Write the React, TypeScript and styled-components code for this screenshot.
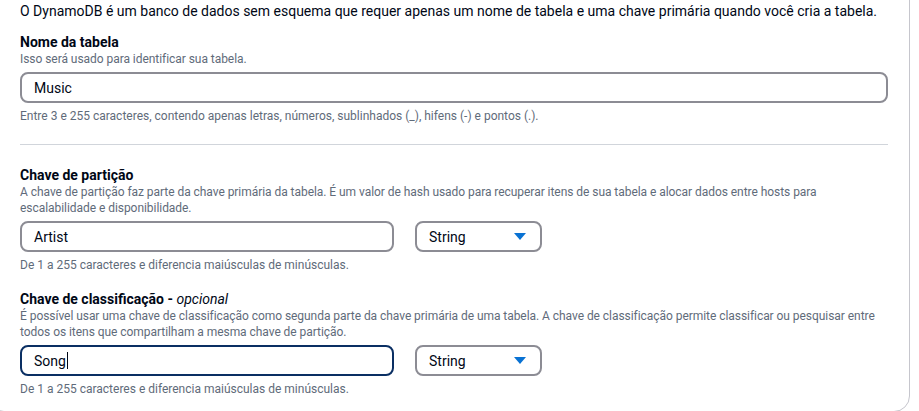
import styled, { createGlobalStyle } from 'styled-components'

const GlobalStyle = createGlobalStyle`
	html, body {
		margin: 0;
		padding: 0;
		background: #ffffff;
		overflow: hidden;
	}
	body {
		font-family: Roboto, 'Noto Sans', sans-serif;
		color: #000716;
	}
`

type FieldProps = {
	label: string
	optional?: boolean
	description: string
	value: string
	hint: string
	focused?: boolean
	withType?: boolean
}

function Field({ label, optional, description, value, hint, focused, withType }: FieldProps) {
	return (
		<FieldBlock>
			<Label>
				{label}
				{optional && (
					<>
						{' - '}
						<Optional>opcional</Optional>
					</>
				)}
			</Label>
			<Description>{description}</Description>
			<InputRow>
				<TextBox $focused={focused} $wide={!withType}>
					{value}
					{focused && <Caret />}
				</TextBox>
				{withType && (
					<SelectBox>
						<span>String</span>
						<svg width="12" height="8" viewBox="0 0 12 8">
							<path d="M0 0 L12 0 L6 7 Z" fill="#0972d3" />
						</svg>
					</SelectBox>
				)}
			</InputRow>
			<Hint>{hint}</Hint>
		</FieldBlock>
	)
}

export default function App() {
	return (
		<>
			<GlobalStyle />
			<Card>
				<Intro>
					O DynamoDB é um banco de dados sem esquema que requer apenas um nome de tabela e uma
					chave primária quando você cria a tabela.
				</Intro>
				<Field
					label="Nome da tabela"
					description="Isso será usado para identificar sua tabela."
					value="Music"
					hint="Entre 3 e 255 caracteres, contendo apenas letras, números, sublinhados (_), hifens (-) e pontos (.)."
				/>
				<Divider />
				<Field
					label="Chave de partição"
					description="A chave de partição faz parte da chave primária da tabela. É um valor de hash usado para recuperar itens de sua tabela e alocar dados entre hosts para escalabilidade e disponibilidade."
					value="Artist"
					hint="De 1 a 255 caracteres e diferencia maiúsculas de minúsculas."
					withType
				/>
				<Field
					label="Chave de classificação"
					optional
					description="É possível usar uma chave de classificação como segunda parte da chave primária de uma tabela. A chave de classificação permite classificar ou pesquisar entre todos os itens que compartilham a mesma chave de partição."
					value="Song"
					hint="De 1 a 255 caracteres e diferencia maiúsculas de minúsculas."
					focused
					withType
				/>
			</Card>
		</>
	)
}

const Card = styled.div`
	box-sizing: border-box;
	width: 922px;
	margin: -20px 0 0 -12px;
	padding: 20px 21px 14px 31px;
	border: 1px solid #c6c6cd;
	border-radius: 16px;
	background: #fff;
	display: flex;
	flex-direction: column;
`

const Intro = styled.p`
	margin: 0 0 12px;
	font-size: 14px;
	line-height: 20px;
	white-space: nowrap;
`

const FieldBlock = styled.div`
	display: flex;
	flex-direction: column;
	& + & {
		margin-top: 17px;
	}
`

const Label = styled.div`
	font-size: 14px;
	line-height: 18px;
	font-weight: 700;
`

const Optional = styled.i`
	font-weight: 400;
`

const Description = styled.div`
	font-size: 12px;
	line-height: 16px;
	color: #5f6b7a;
	letter-spacing: -0.05px;
`

const InputRow = styled.div`
	display: flex;
	gap: 21px;
	margin-top: 5px;
`

const TextBox = styled.div<{ $focused?: boolean; $wide?: boolean }>`
	box-sizing: border-box;
	width: ${(p) => (p.$wide ? '100%' : '374px')};
	height: 31px;
	padding: 0 12px;
	border: 2px solid ${(p) => (p.$focused ? '#0a2f63' : '#8c8c94')};
	border-radius: 8px;
	display: flex;
	align-items: center;
	font-size: 14px;
	color: #000716;
`

const Caret = styled.span`
	display: inline-block;
	width: 1px;
	height: 17px;
	background: #000716;
	margin-left: 1px;
`

const SelectBox = styled.div`
	box-sizing: border-box;
	width: 127px;
	height: 31px;
	padding: 0 14px 0 12px;
	border: 2px solid #8c8c94;
	border-radius: 8px;
	display: flex;
	align-items: center;
	justify-content: space-between;
	font-size: 14px;
`

const Hint = styled.div`
	margin-top: 5px;
	font-size: 12px;
	line-height: 16px;
	color: #5f6b7a;
`

const Divider = styled.hr`
	margin: 20px 0 21px;
	border: none;
	border-top: 1px solid #d1d5db;
`
